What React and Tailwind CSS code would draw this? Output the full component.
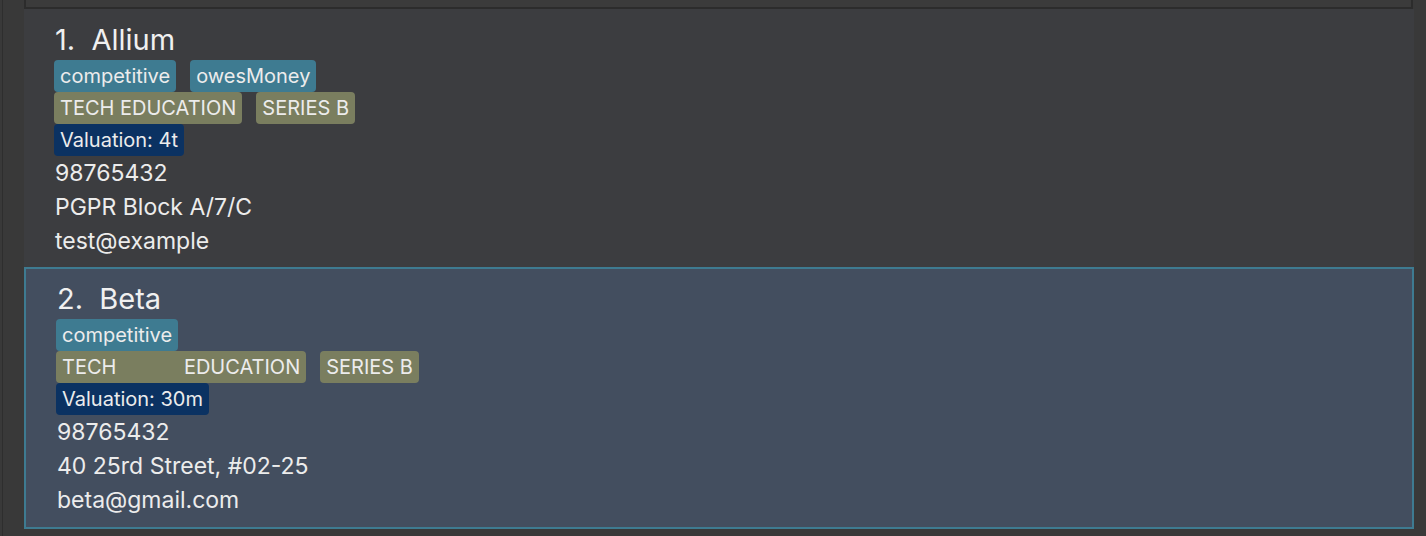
import React from "react";

const people = [
  {
    id: 1,
    name: "Allium",
    tags: ["competitive", "owesMoney"],
    industries: ["TECH EDUCATION", "SERIES B"],
    valuation: "4t",
    phone: "98765432",
    address: "PGPR Block A/7/C",
    email: "test@example",
  },
  {
    id: 2,
    name: "Beta",
    tags: ["competitive"],
    industries: ["TECH            EDUCATION", "SERIES B"],
    valuation: "30m",
    phone: "98765432",
    address: "40 25rd Street, #02-25",
    email: "beta@gmail.com",
  },
];

const Tag = ({ color, children }) => (
  <span
    className={`inline-flex items-center h-[32px] px-[6px] rounded-[4px] text-[20px] leading-none whitespace-pre text-[#ececec] ${color}`}
  >
    {children}
  </span>
);

const PersonCard = ({ person, selected }) => (
  <div
    className={
      selected
        ? "bg-[#434e5f] border-2 border-[#3e7b91] pl-[31px] pt-[10px] pb-[10px]"
        : "bg-[#3c3d40] pl-[31px] pt-[11px] pb-[9px]"
    }
  >
    <div className="h-[40px] flex items-center text-[29px] text-[#f0f0f0] whitespace-pre">
      {person.id}.  {person.name}
    </div>
    {/* Tags */}
    <div className="flex gap-x-[14px] ml-[-1px]">
      {person.tags.map((t) => (
        <Tag key={t} color="bg-[#3e7b91]">
          {t}
        </Tag>
      ))}
    </div>
    <div className="flex gap-x-[14px] ml-[-1px]">
      {person.industries.map((t) => (
        <Tag key={t} color="bg-[#7a7e5f]">
          {t}
        </Tag>
      ))}
    </div>
    <div className="flex ml-[-1px]">
      <Tag color="bg-[#0b3262]">Valuation: {person.valuation}</Tag>
    </div>
    {/* Details */}
    <div className="text-[23px] text-[#ececec]">
      <div className="h-[34px] flex items-center">{person.phone}</div>
      <div className="h-[34px] flex items-center">{person.address}</div>
      <div className="h-[34px] flex items-center">{person.email}</div>
    </div>
  </div>
);

export default function App() {
  return (
    <div
      className="w-[1426px] h-[536px] overflow-hidden bg-[#393939] flex"
      style={{ fontFamily: "Inter, 'Noto Sans', sans-serif" }}
    >
      {/* Left strip */}
      <div className="w-[24px] h-full flex">
        <div className="w-[2px]" />
        <div className="w-[1px] bg-[#2e2e2e]" />
        <div className="flex-1" />
      </div>

      {/* List */}
      <div className="w-[1390px] h-full flex flex-col">
        <div className="h-[9px] bg-[#3b3b3b] border-l-2 border-r-2 border-b-2 border-[#2c2c2c] mr-[1px]" />
        {people.map((p) => (
          <PersonCard key={p.id} person={p} selected={p.id === 2} />
        ))}
      </div>

      {/* Right strip */}
      <div className="flex-1" />
    </div>
  );
}
